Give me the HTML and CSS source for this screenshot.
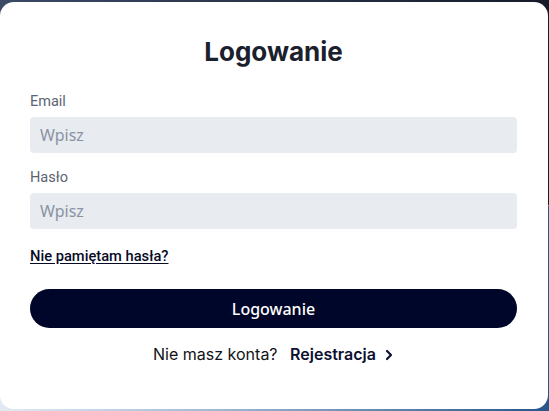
FILE: index.html
```html
<!DOCTYPE html>
<html lang="pl">
<head>
<meta charset="utf-8">
<meta name="viewport" content="width=device-width, initial-scale=1.0">
<link rel="stylesheet" href="styles.css">
<title>Logowanie</title>
</head>
<body>
<main class="card">
	<h1 class="title">Logowanie</h1>
	<form class="form">
		<label class="field">
			<span class="label">Email</span>
			<input class="input" type="email" placeholder="Wpisz">
		</label>
		<label class="field">
			<span class="label">Hasło</span>
			<input class="input" type="password" placeholder="Wpisz">
		</label>
		<a class="forgot" href="#">Nie pamiętam hasła?</a>
		<button class="submit" type="button">Logowanie</button>
	</form>
	<p class="signup">
		Nie masz konta?
		<a class="signup-link" href="#">Rejestracja
			<svg class="chevron" width="10" height="12" viewBox="0 0 10 12" fill="none" stroke="currentColor" stroke-width="2.2" stroke-linecap="round" stroke-linejoin="round"><path d="M3 2 7 6 3 10"/></svg>
		</a>
	</p>
</main>
</body>
</html>
```

FILE: styles.css
```css
html, body {
	margin : 0 ;
	height : 100% ;
	}
body {
	box-sizing : border-box ;
	padding : 2px 1px 0 0 ;
	background :
		linear-gradient( to right, #3c4a66, #151b29 ) top / 100% 50% no-repeat ,
		linear-gradient( to right, #e2eaf3, #9fb8d3 40%, #285489 ) bottom / 100% 50% no-repeat ;
	font-family : Inter, "Noto Sans", sans-serif ;
	}
.card {
	box-sizing : border-box ;
	height : 407px ;
	padding : 34px 31px 0 30px ;
	background : #fff ;
	border-radius : 14px ;
	}
.title {
	margin : 0 0 24px ;
	font-size : 26px ;
	line-height : 32px ;
	font-weight : 700 ;
	color : #1a202c ;
	text-align : center ;
	}
.form {
	display : flex ;
	flex-direction : column ;
	}
.field {
	display : flex ;
	flex-direction : column ;
	gap : 5px ;
	margin-bottom : 15px ;
	}
.label {
	font-family : Roboto, sans-serif ;
	font-size : 14.5px ;
	line-height : 20px ;
	color : #5b6473 ;
	}
.input {
	box-sizing : border-box ;
	height : 36px ;
	padding : 0 10px ;
	border : none ;
	border-radius : 4px ;
	background : #e8ebf0 ;
	font-family : "Noto Sans", sans-serif ;
	font-size : 16px ;
	color : #1a202c ;
	outline : none ;
	}
.input::placeholder {
	color : #8a93a3 ;
	}
.forgot {
	align-self : flex-start ;
	margin-top : 2px ;
	font-family : Roboto, sans-serif ;
	font-size : 14.7px ;
	line-height : 20px ;
	font-weight : 500 ;
	color : #070b26 ;
	text-decoration : underline ;
	text-underline-offset : 2px ;
	}
.submit {
	height : 39px ;
	margin-top : 23px ;
	border : none ;
	border-radius : 20px ;
	background : #00062a ;
	color : #fff ;
	font-family : "Noto Sans", sans-serif ;
	font-size : 16px ;
	font-weight : 500 ;
	}
.signup {
	margin : 14px 0 0 ;
	font-size : 16px ;
	line-height : 24px ;
	color : #111318 ;
	text-align : center ;
	}
.signup-link {
	display : inline-flex ;
	align-items : center ;
	gap : 8px ;
	margin-left : 8px ;
	font-weight : 600 ;
	color : #0b1030 ;
	text-decoration : none ;
	}
.chevron {
	margin-top : 1px ;
	}
```
